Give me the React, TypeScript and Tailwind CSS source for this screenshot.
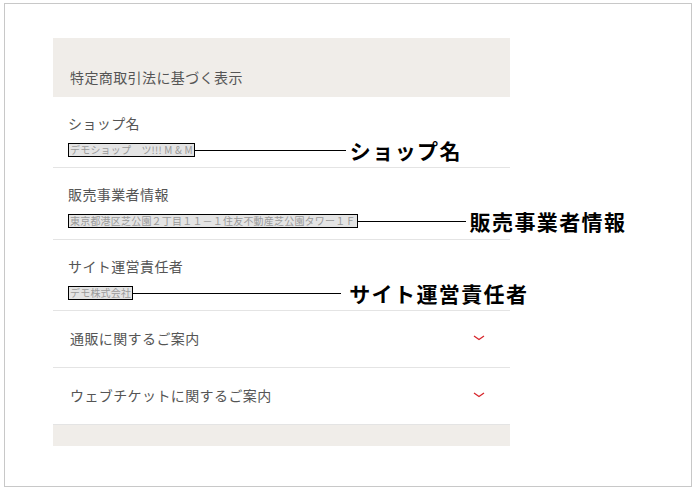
import React from 'react';

const jp = { fontFamily: '"Noto Sans CJK JP", "Noto Sans", sans-serif' };

interface InfoRow {
  label: string;
  value: string;
  line: number;
  gap: number;
  pad: string;
}

const rows: InfoRow[] = [
  { label: 'ショップ名', value: 'デモショップ　ツ!!! M & M', line: 151, gap: 4, pad: 'pb-[10px]' },
  { label: '販売事業者情報', value: '東京都港区芝公園２丁目１１－１住友不動産芝公園タワー１Ｆ', line: 108, gap: 4, pad: 'pb-[11px]' },
  { label: 'サイト運営責任者', value: 'デモ株式会社', line: 208, gap: 8, pad: 'pb-[10px]' },
];

const guides = [
  { label: '通販に関するご案内', h: 'h-[57px]' },
  { label: 'ウェブチケットに関するご案内', h: 'h-[57px]' },
];

function Chevron() {
  return (
    <svg width="12" height="6" viewBox="0 0 12 6" fill="none">
      <path d="M1 1 L6 4.5 L11 1" stroke="#d7252b" strokeWidth="1.3" />
    </svg>
  );
}

export default function App() {
  return (
    <div className="w-[698px] h-[493px] bg-white" style={jp}>
      <div className="ml-[4px] mt-[3px] w-[688px] h-[484px] border border-[#c8c8c8]">
        <div className="ml-[48px] mt-[34px] w-[457px]">
          <div className="h-[59px] bg-[#f0ede9] flex items-end pl-[17px] pb-[10px]">
            <p className="text-[14px] leading-[20px] tracking-[0.4px] text-[#555]">特定商取引法に基づく表示</p>
          </div>

          {rows.map((r) => (
            <div key={r.label} className={`border-b border-[#e4e4e4] pl-[15px] pt-[16px] ${r.pad}`}>
              <p className="text-[14px] leading-[20px] tracking-[0.4px] text-[#555]">{r.label}</p>
              <div className="mt-[10px] h-[14px] flex items-center whitespace-nowrap">
                <span className="shrink-0 border border-black bg-[#e4e4e4] px-px text-[10px] leading-[12px] text-[#9a9a9a] tracking-[0.2px]">
                  {r.value}
                </span>
                <span className="shrink-0 h-px bg-black" style={{ width: r.line }} />
                <span
                  className="shrink-0 text-[21px] leading-[14px] font-bold text-black tracking-[1.4px]"
                  style={{ marginLeft: r.gap }}
                >
                  {r.label}
                </span>
              </div>
            </div>
          ))}

          {guides.map((g) => (
            <div key={g.label} className={`${g.h} border-b border-[#e4e4e4] flex items-center justify-between pl-[17px] pr-[25px] pb-[3px]`}>
              <p className="text-[14px] leading-[20px] tracking-[0.4px] text-[#555]">{g.label}</p>
              <Chevron />
            </div>
          ))}

          <div className="h-[21px] bg-[#f0ede9]" />
        </div>
      </div>
    </div>
  );
}
